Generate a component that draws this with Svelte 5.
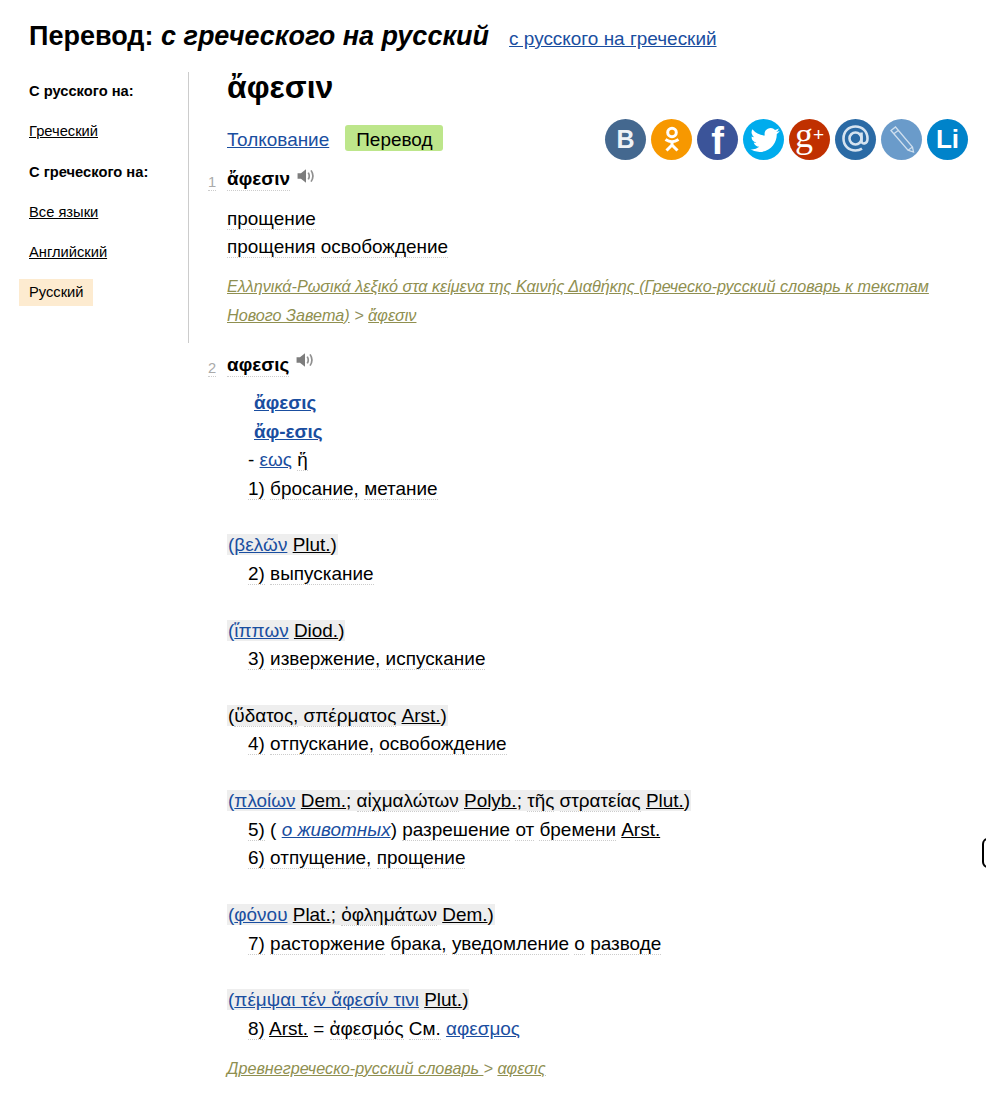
<script lang="ts">
    type Token = [string, string];
    // w = dotted word, a = blue link, r = black link, p = bare punctuation, b = blue bracket, i = italic blue link
    const w = (t: string): Token => ['w', t];
    const a = (t: string): Token => ['a', t];
    const r = (t: string): Token => ['r', t];
    const p = (t: string): Token => ['p', t];
    const b = (t: string): Token => ['b', t];
    const i = (t: string): Token => ['i', t];

    const sideItems = [
        { label: 'С русского на:', head: true },
        { label: 'Греческий' },
        { label: 'С греческого на:', head: true },
        { label: 'Все языки' },
        { label: 'Английский' },
        { label: 'Русский', active: true }
    ];

    const lines: { kind: string; tokens?: Token[] }[] = [
        { kind: 'head', tokens: [['h', 'ἄφεσις']] },
        { kind: 'head', tokens: [['h', 'ἄφ-εσις']] },
        { kind: 'def', tokens: [p('- '), a('εως'), p(' '), w('ἥ')] },
        { kind: 'def', tokens: [w('1)'), p(' '), w('бросание,'), p(' '), w('метание')] },
        { kind: 'gap' },
        { kind: 'note', tokens: [b('('), a('βελῶν'), p(' '), r('Plut.'), p(')')] },
        { kind: 'def', tokens: [w('2)'), p(' '), w('выпускание')] },
        { kind: 'gap' },
        { kind: 'note', tokens: [b('('), a('ἵππων'), p(' '), r('Diod.'), p(')')] },
        { kind: 'def', tokens: [w('3)'), p(' '), w('извержение,'), p(' '), w('испускание')] },
        { kind: 'gap' },
        { kind: 'note', tokens: [p('('), w('ὕδατος,'), p(' '), w('σπέρματος'), p(' '), r('Arst.'), p(')')] },
        { kind: 'def', tokens: [w('4)'), p(' '), w('отпускание,'), p(' '), w('освобождение')] },
        { kind: 'gap' },
        { kind: 'note', tokens: [b('('), a('πλοίων'), p(' '), r('Dem.'), p('; '), w('αἰχμαλώτων'), p(' '), r('Polyb.'), p('; '), w('τῆς'), p(' '), w('στρατείας'), p(' '), r('Plut.'), p(')')] },
        { kind: 'def', tokens: [w('5)'), p(' ( '), i('о животных'), p(') '), w('разрешение'), p(' '), w('от'), p(' '), w('бремени'), p(' '), r('Arst.')] },
        { kind: 'def', tokens: [w('6)'), p(' '), w('отпущение,'), p(' '), w('прощение')] },
        { kind: 'gap' },
        { kind: 'note', tokens: [b('('), a('φόνου'), p(' '), r('Plat.'), p('; '), w('ὀφλημάτων'), p(' '), r('Dem.'), p(')')] },
        { kind: 'def', tokens: [w('7)'), p(' '), w('расторжение'), p(' '), w('брака,'), p(' '), w('уведомление'), p(' '), w('о'), p(' '), w('разводе')] },
        { kind: 'gap' },
        { kind: 'note', tokens: [b('('), a('πέμψαι τέν ἄφεσίν τινι'), p(' '), r('Plut.'), p(')')] },
        { kind: 'def', tokens: [w('8)'), p(' '), r('Arst.'), p(' = '), w('ἀφεσμός'), p(' '), w('См.'), p(' '), a('αφεσμος')] }
    ];
</script>

{#snippet speaker()}
    <svg class="speaker" width="18" height="18" viewBox="0 0 16 16" aria-hidden="true">
        <path d="M0.500 5.500h3L8 2v12L3.500 10.500h-3z" fill="#7d7d7d" />
        <path d="M10 5c1.100 1.800 1.100 4.200 0 6M12.500 3c2 3 2 7 0 10" fill="none" stroke="#8f8f8f" stroke-width="1.500" />
    </svg>
{/snippet}

{#snippet tokens(list: Token[])}
    {#each list as [type, text]}
        {#if type === 'w'}<span class="word">{text}</span>
        {:else if type === 'a'}<a class="blue" href="#x">{text}</a>
        {:else if type === 'r'}<a class="black" href="#x">{text}</a>
        {:else if type === 'b'}<span class="blue">{text}</span>
        {:else if type === 'i'}<a class="blue it" href="#x">{text}</a>
        {:else if type === 'h'}<a class="blue bold" href="#x">{text}</a>
        {:else}<span>{text}</span>{/if}
    {/each}
{/snippet}

<div class="page">
    <header class="top">
        <h1>Перевод: <em>с греческого на русский</em></h1>
        <a class="blue switch" href="#x">с русского на греческий</a>
    </header>

    <div class="columns">
        <nav class="side">
            {#each sideItems as item}
                {#if item.head}
                    <div class="side-item side-head">{item.label}</div>
                {:else}
                    <div class="side-item"><a class:active={item.active} href="#x">{item.label}</a></div>
                {/if}
            {/each}
        </nav>

        <main class="content">
            <h2>ἄφεσιν</h2>

            <div class="tabs">
                <div class="tab-links">
                    <a class="blue tab-link" href="#x">Толкование</a>
                    <span class="tab-on">Перевод</span>
                </div>
                <div class="share">
                    <span class="soc vk">В</span>
                    <span class="soc ok">
                        <svg width="42" height="42" viewBox="0 0 42 42" fill="none" stroke="#fff" stroke-width="3">
                            <circle cx="21" cy="14.500" r="4.300" />
                            <path d="M14.500 21.500c4 2.700 9 2.700 13 0M21 24v3M15.500 32.500L21 27l5.500 5.500" />
                        </svg>
                    </span>
                    <span class="soc fb">f</span>
                    <span class="soc tw">
                        <svg width="42" height="42" viewBox="0 0 24 24" fill="#fff">
                            <g transform="translate(4.200 4.200) scale(0.7)">
                                <path d="M23.950 4.570a10 10 0 0 1-2.820.770 4.960 4.960 0 0 0 2.160-2.720c-.950.550-2 .950-3.130 1.180a4.920 4.920 0 0 0-8.380 4.480A13.930 13.930 0 0 1 1.670 3.150a4.920 4.920 0 0 0 1.520 6.570 4.900 4.900 0 0 1-2.230-.620v.060a4.920 4.920 0 0 0 3.950 4.830 5 5 0 0 1-2.210.080 4.940 4.940 0 0 0 4.600 3.420A9.870 9.870 0 0 1 0 19.540a14 14 0 0 0 7.560 2.210c9.050 0 14-7.500 14-13.980 0-.210 0-.420-.020-.630a9.940 9.940 0 0 0 2.410-2.570z" />
                            </g>
                        </svg>
                    </span>
                    <span class="soc gp">g<sup>+</sup></span>
                    <span class="soc ml">
                        <svg width="42" height="42" viewBox="0 0 42 42" fill="none" stroke="#d5e3f0" stroke-width="2.600">
                            <circle cx="20.500" cy="20.500" r="6" />
                            <path d="M26.500 14.500v8.500c0 3.600 6 3.600 6-2.500 0-7-5-12-12-12s-12 5-12 12 5 12 12 12c2.500 0 4.500-.500 6.500-1.800" />
                        </svg>
                    </span>
                    <span class="soc lj">
                        <svg width="42" height="42" viewBox="0 0 42 42" fill="none" stroke="#cfdfee" stroke-width="1.300">
                            <path d="M10 12.500l4.500-3.500 17 20 1 5-5.500-1.800zM12.500 16l5-3.800M27 32.200l4.500-3.200" />
                        </svg>
                    </span>
                    <span class="soc li">Li</span>
                </div>
            </div>

            <section class="entry first">
                <div class="entry-head">
                    <span class="num word">1</span>
                    <span class="word term">ἄφεσιν</span>
                    {@render speaker()}
                </div>
                <div class="body">
                    <div><span class="word">прощение</span></div>
                    <div><span class="word">прощения</span> <span class="word">освобождение</span></div>
                </div>
                <div class="source">
                    <div><a href="#x">Ελληνικά-Ρωσικά λεξικό στα κείμενα της Καινής Διαθήκης (Греческо-русский словарь к текстам</a></div>
                    <div><a href="#x">Нового Завета)</a> <span>&gt;</span> <a href="#x">ἄφεσιν</a></div>
                </div>
            </section>

            <section class="entry">
                <div class="entry-head">
                    <span class="num word">2</span>
                    <span class="word term">αφεσις</span>
                    {@render speaker()}
                </div>
                <div class="body article">
                    {#each lines as line}
                        {#if line.kind === 'gap'}
                            <div class="line">&nbsp;</div>
                        {:else if line.kind === 'note'}
                            <div class="line"><span class="note">{@render tokens(line.tokens ?? [])}</span></div>
                        {:else}
                            <div class="line {line.kind}">{@render tokens(line.tokens ?? [])}</div>
                        {/if}
                    {/each}
                </div>
                <div class="source">
                    <a href="#x">Древнегреческо-русский словарь&nbsp;</a><span>&gt;</span>
                    <a href="#x">αφεσις</a>
                </div>
            </section>
        </main>
    </div>

    <div class="edge-tab"></div>
</div>

<style>
    :global(body) {
        margin: 0;
        background: #fff;
    }

    .page {
        position: relative;
        width: 986px;
        height: 1114px;
        overflow: hidden;
        font-family: "Liberation Sans", Arial, sans-serif;
        color: #000;
    }

    .top {
        display: flex;
        align-items: baseline;
        padding: 18px 0 0 29px;
        height: 72px;
        box-sizing: border-box;
    }

    h1 {
        margin: 0;
        font-size: 27px;
        line-height: 36px;
        font-weight: bold;
    }

    .switch {
        margin-left: 20px;
        font-size: 18.960px;
    }

    .columns {
        display: grid;
        grid-template-columns: 189px 1fr;
        align-items: start;
    }

    .side {
        height: 271px;
        border-right: 1px solid #ccc;
        box-sizing: border-box;
        padding: 6.200px 0 0 19px;
    }

    .side-item {
        font-size: 14.700px;
        height: 40.200px;
        line-height: 27px;
    }

    .side-head {
        font-weight: bold;
        padding-left: 10px;
    }

    .side-item a {
        color: #000;
        display: inline-block;
        padding: 0 9.500px 0 10px;
    }

    .side-item a.active {
        background: #fdebd0;
        text-decoration: none;
    }

    .content {
        padding-left: 38px;
    }

    h2 {
        margin: 0;
        font-size: 32px;
        line-height: 30px;
        font-weight: bold;
    }

    .tabs {
        display: flex;
        justify-content: space-between;
        align-items: center;
        height: 42px;
        margin-top: 16px;
        padding-right: 18px;
    }

    .tab-links {
        display: flex;
        align-items: center;
        gap: 16px;
        font-size: 18.960px;
    }

    .tab-link {
        padding-top: 2px;
    }

    .tab-on {
        background: #bde68b;
        border-radius: 3px;
        padding: 0 11px;
        height: 26px;
        line-height: 30px;
        margin-bottom: 2px;
    }

    .share {
        display: flex;
        gap: 5px;
    }

    .soc {
        width: 41px;
        height: 41px;
        border-radius: 50%;
        display: flex;
        align-items: center;
        justify-content: center;
        color: #fff;
        font-weight: bold;
    }

    .soc svg {
        flex: none;
    }

    .vk { background: #44688f; color: #eef2f6; font-size: 25px; }
    .ok { background: #f79800; }
    .fb { background: #3b5499; font-size: 38px; line-height: 36px; padding-top: 4px; box-sizing: border-box; }
    .tw { background: #00aced; }
    .gp { background: #c03000; font-family: "Liberation Serif", serif; font-size: 36px; line-height: 33px; font-weight: normal; padding-bottom: 8px; box-sizing: border-box; }
    .gp sup { font-size: 19px; font-family: "Liberation Sans", sans-serif; line-height: 0; }
    .ml { background: #2a6aa5; }
    .lj { background: #6a9bca; }
    .li { background: #0083ca; font-size: 26px; }

    .entry-head {
        position: relative;
        display: flex;
        align-items: flex-end;
        height: 28px;
    }

    .first {
        margin-top: 3px;
    }

    .num {
        position: absolute;
        left: -19px;
        bottom: 0;
        font-size: 14.700px;
        color: #aaa;
    }

    .term {
        font-size: 18.960px;
        font-weight: bold;
    }

    .speaker {
        margin: 0 0 6px 7px;
    }

    .entry + .entry .speaker {
        margin-bottom: 8px;
    }

    .word {
        border-bottom: 1px dotted #ccc;
    }

    .body {
        font-size: 18.960px;
        line-height: 28.440px;
        margin-top: 14px;
    }

    .source {
        margin-top: 10.400px;
        font-size: 16.190px;
        line-height: 28.440px;
        font-style: italic;
        color: #8f8f5c;
    }

    .source a {
        color: #8f8f50;
    }

    .entry + .entry {
        margin-top: 20px;
    }

    .article {
        margin-top: 12.100px;
    }

    .head {
        padding-left: 27px;
    }

    .def {
        padding-left: 21px;
    }

    .note {
        background: #eee;
        padding: 0 1px;
    }

    .blue {
        color: #1a4ea0;
    }

    .black {
        color: #000;
    }

    .it {
        font-style: italic;
    }

    .bold {
        font-weight: bold;
    }

    .edge-tab {
        position: absolute;
        left: 982px;
        top: 838px;
        width: 20px;
        height: 26px;
        border: 2px solid #000;
        border-radius: 6px;
    }
</style>
